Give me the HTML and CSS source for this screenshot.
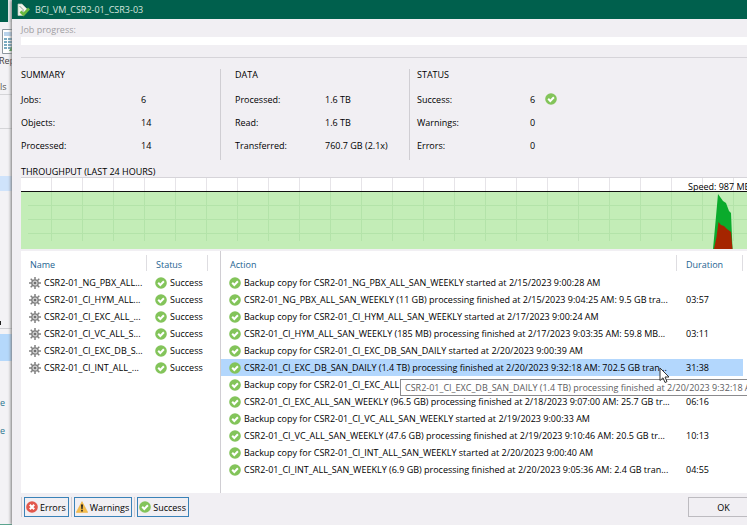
FILE: index.html
```html
<!DOCTYPE html>
<html lang="en">
<head>
<meta charset="utf-8">
<title>BCJ_VM_CSR2-01_CSR3-03</title>
<link rel="stylesheet" href="styles.css">
</head>
<body>
<svg class="defs" aria-hidden="true">
  <symbol id="ok" viewBox="0 0 12 12"><circle cx="6" cy="6" r="5.8" fill="#83c45a"/><path d="M3.2 5.8 5.3 8 8.9 4.3" fill="none" stroke="#fff" stroke-width="2"/></symbol>
  <symbol id="err" viewBox="0 0 12 12"><circle cx="6" cy="6" r="5.8" fill="#e2574c"/><path d="M3.8 3.8 8.2 8.2M8.2 3.8 3.8 8.2" fill="none" stroke="#fff" stroke-width="2.1"/></symbol>
  <symbol id="warn" viewBox="0 0 12 12"><path d="M6 .6 11.8 11.4H.2Z" fill="#f6bd4b" stroke="#e9ae3c" stroke-width=".5"/><path d="M5 3.5H7L6.6 8H5.4ZM5.2 8.8H6.8V10.4H5.2Z" fill="#222"/></symbol>
  <symbol id="gear" viewBox="0 0 12 12"><path d="M6 0V12M0 6H12M1.7 1.7 10.3 10.3M10.3 1.7 1.7 10.3" stroke="#808080" stroke-width="1.5"/><circle cx="6" cy="6" r="3.2" fill="#d4d4d4" stroke="#808080" stroke-width="1.3"/><circle cx="6" cy="6" r="1.3" fill="#707070"/></symbol>
</svg>
<div class="desktop">
  <aside class="backdrop">
    <div class="ribbon-top"></div>
    <div class="ribbon">
      <svg class="report" viewBox="0 0 10 25"><path d="M10 .5H.5V24.500H10" fill="#fff" stroke="#8d979e"/><path d="M2 3H10V7H2Z" fill="#b9d3ec"/><path d="M2 10H5M6 10H10M2 13H5M6 13H10M2 16H5M6 16H10M2 19H5M6 19H10" stroke="#4d8ead" stroke-width="1.4"/><path d="M7 22 10 17V22Z" fill="#4aa34f"/></svg>
      <span class="cut">Rep</span>
      <span class="tools">ls</span>
    </div>
    <div class="band"></div>
    <div class="tree"><div class="tree-hit"></div><div class="tree-mark"></div></div>
    <div class="nav"><div class="nav-hit"></div><span>e</span><span>e</span></div>
    <div class="statusbar"></div>
  </aside>
  <main class="dialog">
    <header class="titlebar">
      <svg class="logo" viewBox="0 0 13 14"><path d="M1 1H5L11 7 6 12.500H1Z" fill="#f3f5ee" stroke="#b9c9bb" stroke-width=".7"/><path d="M2.500 3 6 6.500V11" fill="none" stroke="#899b8d"/><path d="M3.500 8.500 6.500 11.500 12 5.500" fill="none" stroke="#69b83f" stroke-width="2.600"/></svg>
      <h1>BCJ_VM_CSR2-01_CSR3-03</h1>
    </header>
    <div class="content">
      <div class="progress-label" id="pl">Job progress:</div>
      <div class="progress" role="progressbar" aria-labelledby="pl" aria-valuenow="0"></div>
      <div class="stats">
        <section class="summary"><h2>SUMMARY</h2>
          <dl><dt>Jobs:</dt><dd>6</dd><dt>Objects:</dt><dd>14</dd><dt>Processed:</dt><dd>14</dd></dl></section>
        <section class="data"><h2>DATA</h2>
          <dl><dt>Processed:</dt><dd>1.6 TB</dd><dt>Read:</dt><dd>1.6 TB</dd><dt>Transferred:</dt><dd>760.7 GB (2.1x)</dd></dl></section>
        <section class="status"><h2>STATUS</h2>
          <dl><dt>Success:</dt><dd>6<svg class="icon"><use href="#ok"/></svg></dd><dt>Warnings:</dt><dd>0</dd><dt>Errors:</dt><dd>0</dd></dl></section>
      </div>
      <h2 class="chart-title">THROUGHPUT (LAST 24 HOURS)</h2>
      <div class="chart">
        <div class="speed">Speed: 987 MB/s</div>
        <svg class="plot">
          <defs><pattern id="grid" width="31" height="14" patternUnits="userSpaceOnUse"><path d="M30.500 0V14M0 13.500H31" stroke="#b3e3a9" fill="none"/></pattern></defs>
          <rect width="100%" height="100%" fill="#c3edb7"/>
          <rect x="7" width="100%" height="49" fill="url(#grid)"/>
          <path d="M692 57 694.500 30 697 2 702 9 705 11 708 19 710 21 711.500 57Z" fill="#0aab2c"/>
          <path d="M693 57 695.500 45 697.500 30 700 33 703 34 706 37 710 40 711.500 57Z" fill="#a52500"/>
        </svg>
      </div>
      <div class="lists">
        <table class="jobs">
          <thead><tr><th>Name</th><th>Status</th><th></th></tr></thead>
          <tbody>
            <tr><td><svg class="icon"><use href="#gear"/></svg>CSR2-01_NG_PBX_ALL...</td><td><svg class="icon"><use href="#ok"/></svg>Success</td></tr>
            <tr><td><svg class="icon"><use href="#gear"/></svg>CSR2-01_CI_HYM_ALL...</td><td><svg class="icon"><use href="#ok"/></svg>Success</td></tr>
            <tr><td><svg class="icon"><use href="#gear"/></svg>CSR2-01_CI_EXC_ALL_...</td><td><svg class="icon"><use href="#ok"/></svg>Success</td></tr>
            <tr><td><svg class="icon"><use href="#gear"/></svg>CSR2-01_CI_VC_ALL_S...</td><td><svg class="icon"><use href="#ok"/></svg>Success</td></tr>
            <tr><td><svg class="icon"><use href="#gear"/></svg>CSR2-01_CI_EXC_DB_S...</td><td><svg class="icon"><use href="#ok"/></svg>Success</td></tr>
            <tr><td><svg class="icon"><use href="#gear"/></svg>CSR2-01_CI_INT_ALL_...</td><td><svg class="icon"><use href="#ok"/></svg>Success</td></tr>
          </tbody>
        </table>
        <div class="log">
        <table class="actions">
          <thead><tr><th>Action</th><th>Duration</th></tr></thead>
          <tbody>
            <tr><td><svg class="icon"><use href="#ok"/></svg>Backup copy for CSR2-01_NG_PBX_ALL_SAN_WEEKLY started at 2/15/2023 9:00:28 AM</td><td></td></tr>
            <tr><td><svg class="icon"><use href="#ok"/></svg>CSR2-01_NG_PBX_ALL_SAN_WEEKLY (11 GB) processing finished at 2/15/2023 9:04:25 AM: 9.5 GB tra...</td><td>03:57</td></tr>
            <tr><td><svg class="icon"><use href="#ok"/></svg>Backup copy for CSR2-01_CI_HYM_ALL_SAN_WEEKLY started at 2/17/2023 9:00:24 AM</td><td></td></tr>
            <tr><td><svg class="icon"><use href="#ok"/></svg>CSR2-01_CI_HYM_ALL_SAN_WEEKLY (185 MB) processing finished at 2/17/2023 9:03:35 AM: 59.8 MB...</td><td>03:11</td></tr>
            <tr><td><svg class="icon"><use href="#ok"/></svg>Backup copy for CSR2-01_CI_EXC_DB_SAN_DAILY started at 2/20/2023 9:00:39 AM</td><td></td></tr>
            <tr class="selected"><td><svg class="icon"><use href="#ok"/></svg>CSR2-01_CI_EXC_DB_SAN_DAILY (1.4 TB) processing finished at 2/20/2023 9:32:18 AM: 702.5 GB tran...</td><td>31:38</td></tr>
            <tr><td><svg class="icon"><use href="#ok"/></svg>Backup copy for CSR2-01_CI_EXC_ALL</td><td></td></tr>
            <tr><td><svg class="icon"><use href="#ok"/></svg>CSR2-01_CI_EXC_ALL_SAN_WEEKLY (96.5 GB) processing finished at 2/18/2023 9:07:00 AM: 25.7 GB tr...</td><td>06:16</td></tr>
            <tr><td><svg class="icon"><use href="#ok"/></svg>Backup copy for CSR2-01_CI_VC_ALL_SAN_WEEKLY started at 2/19/2023 9:00:33 AM</td><td></td></tr>
            <tr><td><svg class="icon"><use href="#ok"/></svg>CSR2-01_CI_VC_ALL_SAN_WEEKLY (47.6 GB) processing finished at 2/19/2023 9:10:46 AM: 20.5 GB tr...</td><td>10:13</td></tr>
            <tr><td><svg class="icon"><use href="#ok"/></svg>Backup copy for CSR2-01_CI_INT_ALL_SAN_WEEKLY started at 2/20/2023 9:00:40 AM</td><td></td></tr>
            <tr><td><svg class="icon"><use href="#ok"/></svg>CSR2-01_CI_INT_ALL_SAN_WEEKLY (6.9 GB) processing finished at 2/20/2023 9:05:36 AM: 2.4 GB tran...</td><td>04:55</td></tr>
          </tbody>
        </table>
        <div class="tooltip" role="tooltip">CSR2-01_CI_EXC_DB_SAN_DAILY (1.4 TB) processing finished at 2/20/2023 9:32:18 AM</div>
        <svg class="cursor" viewBox="0 0 11 17"><path d="M1 1V13.500L4 10.800 6 15.500 8 14.600 6 10H10Z" fill="#fff" stroke="#333"/></svg>
        </div>
      </div>
      <footer class="footer">
        <div class="filter"><button type="button"><svg class="icon"><use href="#err"/></svg>Errors</button></div>
        <div class="filter"><button type="button"><svg class="icon"><use href="#warn"/></svg>Warnings</button></div>
        <div class="filter"><button type="button"><svg class="icon"><use href="#ok"/></svg>Success</button></div>
        <button type="button" class="ok">OK</button>
      </footer>
    </div>
  </main>
</div>
</body>
</html>
```
FILE: styles.css
```css
* { box-sizing: border-box; }
body, h1, h2, dl, dd { margin: 0; }
body {
  overflow: hidden;
  font: 9px/17px "Open Sans", "Noto Sans", sans-serif;
  color: #000;
  background: #f1eff3;
}
h1, h2, th { font-size: 9px; font-weight: 400; text-align: left; }
.defs { position: absolute; width: 0; height: 0; }
.icon { width: 12px; height: 12px; flex: none; }

.desktop { display: grid; grid-template-columns: 12px minmax(0, 1fr); min-height: 100vh; margin-right: -13px; }

.backdrop { display: flex; flex-direction: column; overflow: hidden; background: #f3f2f5; }
.ribbon-top { height: 22px; background: #00604d; border-right: 4px solid #e4e9ea; }
.ribbon { display: flex; flex-direction: column; height: 73px; border-bottom: 1px solid #d5d5d8; }
.report { width: 10px; height: 25px; margin: 7px 0 0 2px; }
.cut { margin-left: -1px; height: 26px; line-height: 14px; color: #444; }
.tools { line-height: 14px; color: #555; }
.band { height: 34px; border-bottom: 1px solid #d5d5d8; }
.tree { height: 200px; padding-top: 47px; border-bottom: 1px solid #cfcfd3; }
.tree-hit { height: 15px; margin-bottom: 130px; background: #cfe3fb; }
.tree-mark { width: 1px; height: 4px; background: #222; }
.nav { display: flex; flex-direction: column; gap: 11px; padding-top: 5px; color: #2a7590; }
.nav-hit { height: 27px; margin-bottom: 22px; background: #b5d8fb; }
.statusbar { height: 1px; margin-top: auto; background: #5ba58f; }

.dialog { display: flex; flex-direction: column; min-width: 0; background: #f1eff3; box-shadow: -1px 0 3px #777; }
.titlebar { display: flex; align-items: center; gap: 5px; height: 19px; padding-left: 5px; background: #00604d; color: #d5e5df; }
.logo { width: 13px; height: 14px; }
.content { display: flex; flex: 1; flex-direction: column; padding-left: 9px; }
.progress-label { margin-top: 1px; height: 17px; line-height: 19px; color: #a09ea2; }
.progress { height: 8px; margin-bottom: 12px; background: #fff; }
.stats { display: flex; padding: 11px 0 5px; border-top: 1px solid #d6d4d9; }
.stats section { height: 91px; white-space: nowrap; }
.stats section + section { border-left: 1px solid #d0ced3; }
.stats h2 { height: 22px; line-height: 11px; }
.stats dl { display: grid; grid-template-columns: 120px auto; grid-auto-rows: 23px; line-height: 17px; }
.summary { width: 199px; }
.data { width: 189px; padding-left: 14px; }
.data dl { grid-template-columns: 90px auto; }
.status { flex: 1; padding-left: 7px; }
.status dl { grid-template-columns: 113px auto; }
.status dd { display: flex; gap: 10px; }
.status .icon { margin-top: 2px; }
.chart-title { height: 12px; line-height: 14px; }
.chart { border-top: 1px solid #d6d4d9; background: repeating-linear-gradient(90deg, #fff 0 30px, #e6e4e8 30px 31px); }
.speed { height: 13px; padding-right: 2px; text-align: right; line-height: 17px; }
.plot { display: block; width: 100%; height: 58px; border-top: 1px solid #111; overflow: hidden; }

.lists { display: flex; flex: 1; min-height: 242px; margin-top: 2px; background: #fff; }
table { border-collapse: collapse; table-layout: fixed; white-space: nowrap; }
th, td { height: 17px; padding: 0; }
th { height: 23px; padding-top: 4px; color: #1d6391; background: linear-gradient(#dedde1, #dedde1) right 4px / 1px 16px no-repeat; }
td .icon { margin-right: 3px; vertical-align: -3px; }
.jobs { width: 187px; height: max-content; margin-right: 12px; }
.jobs th:nth-child(1) { width: 126px; padding-left: 9px; }
.jobs th:nth-child(2) { width: 61px; padding-left: 9px; }
.jobs th:nth-child(3) { width: 0; }
.jobs td:first-child { padding-left: 8px; }
.jobs td:nth-child(2) { padding-left: 8px; }
.log { position: relative; flex: 1; min-width: 0; border-left: 1px solid #d0ced3; padding-right: 17px; }
.actions { width: 100%; }
.actions th:first-child { padding-left: 9px; }
.actions th:nth-child(2) { width: 66px; padding-left: 9px; }
.actions td:first-child { padding-left: 8px; }
.actions td:nth-child(2) { padding-left: 9px; }
.selected { background: #b3d7fd; }
.tooltip { position: absolute; left: 179px; top: 128px; height: 17px; padding: 0 4px; border: 1px solid #8b8b8e; background: #fff; color: #5c5c60; line-height: 15px; white-space: nowrap; }
.cursor { position: absolute; left: 438px; top: 116px; width: 11px; height: 17px; }

.footer { display: flex; align-items: center; gap: 2px; padding: 4px 0 8px; }
.footer button { display: flex; align-items: center; justify-content: center; gap: 2px; height: 20px; padding: 0 2px 0 1px; border: 1px solid #3a82b8; background: #f1eff3; color: #000; font: inherit; }
.filter { padding-left: 2px; border-left: 1px solid #d0ced3; }
.footer .ok { width: 72px; margin-left: auto; border-color: #bdbbc0; }
```
